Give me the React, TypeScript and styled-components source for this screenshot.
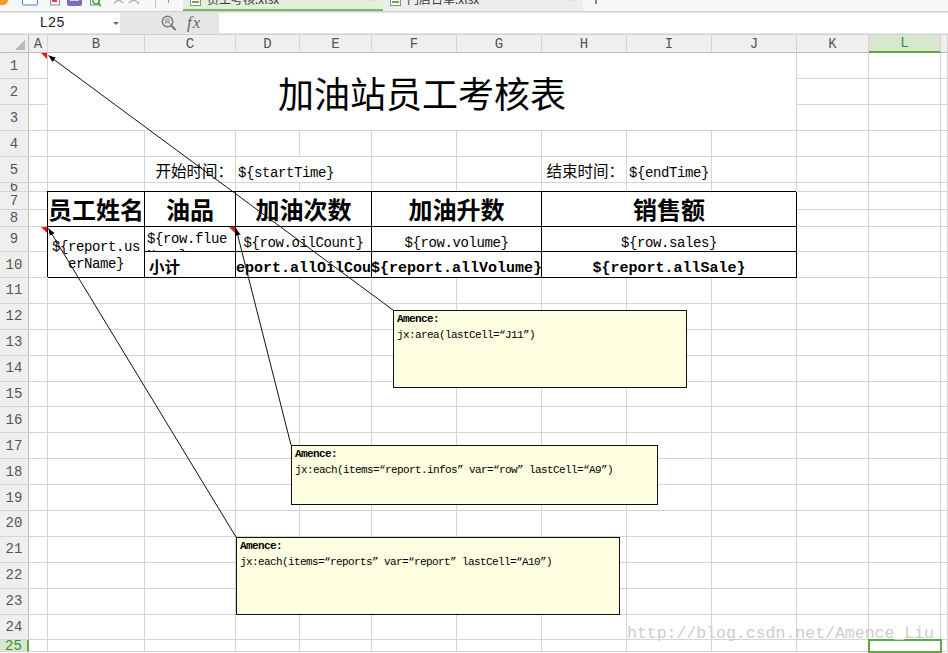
import React from 'react'
import styled, { createGlobalStyle, css } from 'styled-components'

const CJK = `"Noto Sans CJK SC", "Noto Sans", sans-serif`
const MONO = `"Liberation Mono", "Noto Sans CJK SC", monospace`
const GRID = '#d4d4d4'
const GREEN = '#5fa63f'

const GlobalStyle = createGlobalStyle`
  html, body {
    margin: 0;
    padding: 0;
    background: #fff;
  }
  body {
    overflow: hidden;
  }
`

const colNames = ['A', 'B', 'C', 'D', 'E', 'F', 'G', 'H', 'I', 'J', 'K', 'L', 'M']
const colWidths = [19, 97, 91, 64, 72, 85, 85, 85, 85, 85, 72, 72, 7]
const rowHeights = [26, 26, 26, 26, 26, 9, 18, 17, 25, 26, ...Array(14).fill(25.9), 12]

const ACTIVE_COL = 12
const ACTIVE_ROW = 25

type Kind = 'title' | 'label' | 'text' | 'head' | 'value' | 'wrap' | 'wrapTop' | 'sub' | 'total'

interface Block {
  r: number
  c: number
  rs?: number
  cs?: number
  kind: Kind
  text: string
  table?: boolean
}

const blocks: Block[] = [
  { r: 1, c: 2, rs: 3, cs: 9, kind: 'title', text: '加油站员工考核表' },
  { r: 5, c: 3, kind: 'label', text: '开始时间：' },
  { r: 5, c: 4, cs: 2, kind: 'text', text: '${startTime}' },
  { r: 5, c: 8, kind: 'label', text: '结束时间：' },
  { r: 5, c: 9, kind: 'text', text: '${endTime}' },
  { r: 7, c: 2, rs: 2, kind: 'head', text: '员工姓名', table: true },
  { r: 7, c: 3, rs: 2, kind: 'head', text: '油品', table: true },
  { r: 7, c: 4, rs: 2, cs: 2, kind: 'head', text: '加油次数', table: true },
  { r: 7, c: 6, rs: 2, cs: 2, kind: 'head', text: '加油升数', table: true },
  { r: 7, c: 8, rs: 2, cs: 3, kind: 'head', text: '销售额', table: true },
  { r: 9, c: 2, rs: 2, kind: 'wrap', text: '${report.userName}', table: true },
  { r: 9, c: 3, kind: 'wrapTop', text: '${row.flueName}', table: true },
  { r: 9, c: 4, cs: 2, kind: 'value', text: '${row.oilCount}', table: true },
  { r: 9, c: 6, cs: 2, kind: 'value', text: '${row.volume}', table: true },
  { r: 9, c: 8, cs: 3, kind: 'value', text: '${row.sales}', table: true },
  { r: 10, c: 3, kind: 'sub', text: '小计', table: true },
  { r: 10, c: 4, cs: 2, kind: 'total', text: '${report.allOilCount}', table: true },
  { r: 10, c: 6, cs: 2, kind: 'total', text: '${report.allVolume}', table: true },
  { r: 10, c: 8, cs: 3, kind: 'total', text: '${report.allSale}', table: true },
]

const noteCells = new Set(['1:1', '9:1', '9:3'])

const comments = [
  { x: 393, y: 310, w: 294, h: 78, tx: 48.5, ty: 55.5, text: 'jx:area(lastCell=“J11”)' },
  { x: 291, y: 445, w: 367, h: 60, tx: 236, ty: 228.5, text: 'jx:each(items=“report.infos” var=“row” lastCell=“A9”)' },
  { x: 236, y: 537, w: 384, h: 78, tx: 48.5, ty: 228.5, text: 'jx:each(items=“reports” var=“report” lastCell=“A10”)' },
]

const Window = styled.div`
  position: relative;
  width: 948px;
  height: 653px;
  overflow: hidden;
  background: #fff;
  display: flex;
  flex-direction: column;
`

/* ---- tab strip ---- */

const TabStrip = styled.div`
  flex: none;
  height: 11px;
  display: flex;
  align-items: flex-start;
  background: #f7f7f7;
  border-bottom: 1px solid #d2d2d2;
  overflow: hidden;
`

const QuickBar = styled.svg`
  flex: none;
  display: block;
`

const Divider = styled.div`
  flex: none;
  width: 1px;
  height: 8px;
  background: #c4c4c4;
`

const NewTabMark = styled.div`
  flex: none;
  width: 1px;
  height: 3px;
  margin: 0 14px 0 12px;
  background: #9a9a9a;
`

const Tab = styled.div<{ $active?: boolean }>`
  flex: none;
  width: 200px;
  height: 11px;
  box-sizing: border-box;
  display: flex;
  align-items: flex-start;
  gap: 6px;
  padding: 0 7px;
  background: ${p => (p.$active ? '#e3eedb' : '#ededed')};
  box-shadow: ${p => (p.$active ? 'inset 0 -2px 0 #7db46c' : 'none')};
`

const TabLabel = styled.span`
  margin-top: -7px;
  font: 400 12px/12px ${CJK};
  color: #3a3a3a;
  white-space: nowrap;
`

const TabClose = styled.span`
  margin-left: auto;
  margin-top: -8px;
  font: 400 13px/13px ${MONO};
  color: #555;
`

const StripEnd = styled.div`
  flex: none;
  width: 2px;
  height: 4px;
  margin-left: 12px;
  background: #8a8a8a;
`

/* ---- formula bar ---- */

const FormulaBar = styled.div`
  flex: none;
  height: 23px;
  box-sizing: border-box;
  padding: 1px 0;
  display: flex;
  background: #e6e6e9;
  border-bottom: 1px solid #d0d0d0;
`

const NameBox = styled.div`
  flex: none;
  width: 120px;
  display: flex;
  align-items: center;
  background: #fff;
`

const NameText = styled.span`
  width: 104px;
  text-align: center;
  font: 400 14px ${MONO};
  color: #222;
`

const Caret = styled.span`
  margin-left: 9px;
  border-style: solid;
  border-width: 3px 3px 0 3px;
  border-color: #666 transparent transparent transparent;
`

const ToolZone = styled.div`
  flex: none;
  width: 99px;
  box-sizing: border-box;
  padding-left: 41px;
  display: flex;
  align-items: center;
  gap: 11px;
`

const FxText = styled.span`
  font: italic 400 17px ${`"Liberation Serif", serif`};
  color: #666;
  letter-spacing: 1px;
`

const FormulaInput = styled.div`
  flex: 1;
  background: #fff;
`

/* ---- sheet ---- */

const Sheet = styled.div`
  flex: none;
  display: grid;
  grid-template-columns: 29px ${colWidths.map(w => `${w}px`).join(' ')};
  grid-template-rows: 18px ${rowHeights.map(h => `${h}px`).join(' ')};
`

const Corner = styled.div`
  grid-row: 1;
  grid-column: 1;
  position: relative;
  background: #efefef;
  border-right: 1px solid #bdbdbd;
  border-bottom: 1px solid #bdbdbd;

  &::after {
    content: '';
    position: absolute;
    right: 3px;
    bottom: 2px;
    border-style: solid;
    border-width: 0 0 10px 10px;
    border-color: transparent transparent #b8b8b8 transparent;
  }
`

const ColHead = styled.div<{ $c: number; $active?: boolean }>`
  grid-row: 1;
  grid-column: ${p => p.$c + 1};
  min-width: 0;
  overflow: hidden;
  display: flex;
  align-items: center;
  justify-content: center;
  background: ${p => (p.$active ? '#d8e8d0' : '#efefef')};
  color: ${p => (p.$active ? '#3d8c2c' : '#555')};
  border-right: 1px solid #d3d3d3;
  border-bottom: ${p => (p.$active ? `2px solid ${GREEN}` : '1px solid #bdbdbd')};
  font: 400 14px ${MONO};
`

const RowHead = styled.div<{ $r: number; $active?: boolean }>`
  grid-column: 1;
  grid-row: ${p => p.$r + 1};
  min-height: 0;
  overflow: hidden;
  display: flex;
  align-items: center;
  justify-content: center;
  background: ${p => (p.$active ? '#d8e8d0' : '#efefef')};
  color: ${p => (p.$active ? '#3d8c2c' : '#555')};
  border-right: ${p => (p.$active ? `2px solid ${GREEN}` : '1px solid #bdbdbd')};
  border-bottom: 1px solid #d6d6d6;
  font: 400 14px/14px ${MONO};
`

type HAlign = 'flex-start' | 'center' | 'flex-end'

const Cell = styled.div<{
  $r: number
  $c: number
  $rs: number
  $cs: number
  $h: HAlign
  $top?: boolean
  $table?: boolean
  $note?: boolean
  $sel?: boolean
}>`
  grid-row: ${p => p.$r + 1} / span ${p => p.$rs};
  grid-column: ${p => p.$c + 1} / span ${p => p.$cs};
  box-sizing: border-box;
  min-width: 0;
  min-height: 0;
  display: flex;
  justify-content: ${p => p.$h};
  align-items: ${p => (p.$top ? 'flex-start' : 'center')};
  padding: ${p => (p.$top ? '4px 2px 0' : '0 2px')};
  overflow: hidden;
  color: #000;
  border-right: 1px solid ${GRID};
  border-bottom: 1px solid ${GRID};

  ${p =>
    p.$table &&
    css`
      position: relative;
      z-index: 1;
      border-right-color: #000;
      border-bottom-color: #000;
      box-shadow: -1px -1px 0 #000;
    `}

  ${p =>
    p.$note &&
    css`
      position: relative;
      &::after {
        content: '';
        position: absolute;
        top: 0;
        right: 0;
        z-index: 2;
        border-style: solid;
        border-width: 0 6px 6px 0;
        border-color: transparent #e8141b transparent transparent;
      }
    `}

  ${p =>
    p.$sel &&
    css`
      position: relative;
      z-index: 2;
      outline: 2px solid ${GREEN};
      outline-offset: -1px;
    `}
`

const TitleText = styled.span`
  font: 400 36px/44px ${CJK};
  white-space: nowrap;
`

const LabelText = styled.span`
  font: 400 15.5px/20px ${CJK};
  white-space: nowrap;
`

const MonoText = styled.span`
  flex-shrink: 0;
  margin-top: 8px;
  font: 400 14px/17px ${MONO};
  letter-spacing: -0.4px;
  white-space: nowrap;
`

const HeadText = styled.span`
  flex-shrink: 0;
  font: 700 24px/30px ${CJK};
  white-space: nowrap;
`

const WrapText = styled.span<{ $left?: boolean }>`
  width: 100%;
  margin-top: ${p => (p.$left ? '0' : '7px')};
  font: 400 14px/17px ${MONO};
  letter-spacing: -0.4px;
  word-break: break-all;
  text-align: ${p => (p.$left ? 'left' : 'center')};
`

const SubText = styled.span`
  margin-left: 2px;
  margin-top: 2px;
  font: 700 15.5px/20px ${CJK};
  white-space: nowrap;
`

const TotalText = styled.span`
  flex-shrink: 0;
  margin-top: 8px;
  font: 700 15px/18px ${MONO};
  white-space: nowrap;
`

/* ---- overlays ---- */

const Leaders = styled.svg`
  position: absolute;
  left: 0;
  top: 0;
  z-index: 5;
  pointer-events: none;
`

const NoteBox = styled.div<{ $x: number; $y: number; $w: number; $h: number }>`
  position: absolute;
  left: ${p => p.$x}px;
  top: ${p => p.$y}px;
  width: ${p => p.$w}px;
  height: ${p => p.$h}px;
  z-index: 6;
  box-sizing: border-box;
  padding: 0 3px;
  background: #ffffe1;
  border: 1px solid #111;
  font: 400 11px/16px ${MONO};
  letter-spacing: -0.6px;
  color: #000;
  white-space: nowrap;
`

const NoteAuthor = styled.div`
  font-weight: 700;
`

const Watermark = styled.div`
  position: absolute;
  left: 627px;
  top: 624px;
  z-index: 4;
  font: 400 16.5px/20px ${MONO};
  color: #cdcdcd;
  white-space: nowrap;
  pointer-events: none;
`

function DocIcon() {
  return (
    <svg width="11" height="11" viewBox="0 0 11 11" style={{ flex: 'none', marginTop: -5 }}>
      <rect x="0.5" y="0.5" width="10" height="10" fill="#fff" stroke="#8a8a8a" />
      <rect x="2" y="6" width="7" height="2" fill="#6aa84f" />
    </svg>
  )
}

function renderContent(b: Block) {
  switch (b.kind) {
    case 'title':
      return <TitleText>{b.text}</TitleText>
    case 'label':
      return <LabelText>{b.text}</LabelText>
    case 'head':
      return <HeadText>{b.text}</HeadText>
    case 'wrap':
      return <WrapText>{b.text}</WrapText>
    case 'wrapTop':
      return <WrapText $left>{b.text}</WrapText>
    case 'sub':
      return <SubText>{b.text}</SubText>
    case 'total':
      return <TotalText>{b.text}</TotalText>
    default:
      return <MonoText>{b.text}</MonoText>
  }
}

function alignOf(kind: Kind): HAlign {
  if (kind === 'label') return 'flex-end'
  if (kind === 'text' || kind === 'wrapTop' || kind === 'sub') return 'flex-start'
  return 'center'
}

function SheetGrid() {
  const anchors = new Map<string, Block>()
  const covered = new Set<string>()
  blocks.forEach(b => {
    anchors.set(`${b.r}:${b.c}`, b)
    for (let r = b.r; r < b.r + (b.rs ?? 1); r++) {
      for (let c = b.c; c < b.c + (b.cs ?? 1); c++) {
        if (r !== b.r || c !== b.c) covered.add(`${r}:${c}`)
      }
    }
  })

  const cells: React.ReactNode[] = []
  rowHeights.forEach((_, ri) => {
    const r = ri + 1
    colNames.forEach((_, ci) => {
      const c = ci + 1
      const key = `${r}:${c}`
      if (covered.has(key)) return
      const b = anchors.get(key)
      cells.push(
        <Cell
          key={key}
          $r={r}
          $c={c}
          $rs={b?.rs ?? 1}
          $cs={b?.cs ?? 1}
          $h={b ? alignOf(b.kind) : 'flex-start'}
          $top={b?.kind === 'wrapTop'}
          $table={b?.table}
          $note={noteCells.has(key)}
          $sel={r === ACTIVE_ROW && c === ACTIVE_COL}
        >
          {b && renderContent(b)}
        </Cell>
      )
    })
  })

  return (
    <Sheet>
      <Corner />
      {colNames.map((n, i) => (
        <ColHead key={n} $c={i + 1} $active={i + 1 === ACTIVE_COL}>
          {i < 12 ? n : ''}
        </ColHead>
      ))}
      {rowHeights.map((_, i) => (
        <RowHead key={i} $r={i + 1} $active={i + 1 === ACTIVE_ROW}>
          {i + 1}
        </RowHead>
      ))}
      {cells}
    </Sheet>
  )
}

export default function App() {
  return (
    <>
      <GlobalStyle />
      <Window>
        <TabStrip>
          <QuickBar width="155" height="11" viewBox="0 0 155 11">
            <path d="M0 0 H8 C8 3 6 5 2 5 H0 Z" fill="#f39a2f" />
            <rect x="22.5" y="-6" width="15" height="11" rx="1" fill="#fff" stroke="#4d7fd1" />
            <rect x="50.5" y="-5" width="9" height="10" fill="#fff" stroke="#8e8e8e" />
            <rect x="52" y="-2" width="5" height="4" fill="#e03a3a" />
            <rect x="67" y="-4" width="15" height="10" rx="2" fill="#7a6cc4" />
            <rect x="70" y="-4" width="9" height="5" fill="#d8d3f2" />
            <rect x="90.5" y="-5" width="9" height="10" fill="#fff" stroke="#8e8e8e" />
            <circle cx="96" cy="1" r="3" fill="none" stroke="#3da33d" strokeWidth="1.4" />
            <line x1="98" y1="3" x2="101" y2="6" stroke="#3da33d" strokeWidth="1.4" />
            <path d="M114 4 Q118 -3 123 3" fill="none" stroke="#b5b5b5" strokeWidth="1.3" />
            <path d="M129 3 Q134 -3 139 4" fill="none" stroke="#b5b5b5" strokeWidth="1.3" />
          </QuickBar>
          <Divider />
          <NewTabMark />
          <Tab $active>
            <DocIcon />
            <TabLabel>员工考核.xlsx</TabLabel>
            <TabClose>×</TabClose>
          </Tab>
          <Tab>
            <DocIcon />
            <TabLabel>门店日单.xlsx</TabLabel>
            <TabClose>×</TabClose>
          </Tab>
          <StripEnd />
        </TabStrip>

        <FormulaBar>
          <NameBox>
            <NameText>L25</NameText>
            <Caret />
          </NameBox>
          <ToolZone>
            <svg width="15" height="16" viewBox="0 0 15 16">
              <circle cx="6.5" cy="6.5" r="5.2" fill="none" stroke="#777" strokeWidth="1.4" />
              <path d="M5 9 V4 H7.2 Q8.6 4 8.6 5.3 Q8.6 6.6 7.2 6.6 H5 M7 6.6 L8.8 9" fill="none" stroke="#888" strokeWidth="0.9" />
              <line x1="10.3" y1="10.3" x2="14" y2="14.5" stroke="#777" strokeWidth="2" strokeLinecap="round" />
            </svg>
            <FxText>fx</FxText>
          </ToolZone>
          <FormulaInput />
        </FormulaBar>

        <SheetGrid />

        <Leaders width="948" height="653" viewBox="0 0 948 653">
          <defs>
            <marker id="tip" markerWidth="8" markerHeight="8" refX="7" refY="4" orient="auto" markerUnits="userSpaceOnUse">
              <path d="M0 1.2 L7 4 L0 6.8 Z" fill="#000" />
            </marker>
          </defs>
          {comments.map((n, i) => (
            <line key={i} x1={n.x} y1={n.y} x2={n.tx} y2={n.ty} stroke="#111" strokeWidth="1" markerEnd="url(#tip)" />
          ))}
        </Leaders>

        {comments.map((n, i) => (
          <NoteBox key={i} $x={n.x} $y={n.y} $w={n.w} $h={n.h}>
            <NoteAuthor>Amence:</NoteAuthor>
            <div>{n.text}</div>
          </NoteBox>
        ))}

        <Watermark>http://blog.csdn.net/Amence_Liu</Watermark>
      </Window>
    </>
  )
}
